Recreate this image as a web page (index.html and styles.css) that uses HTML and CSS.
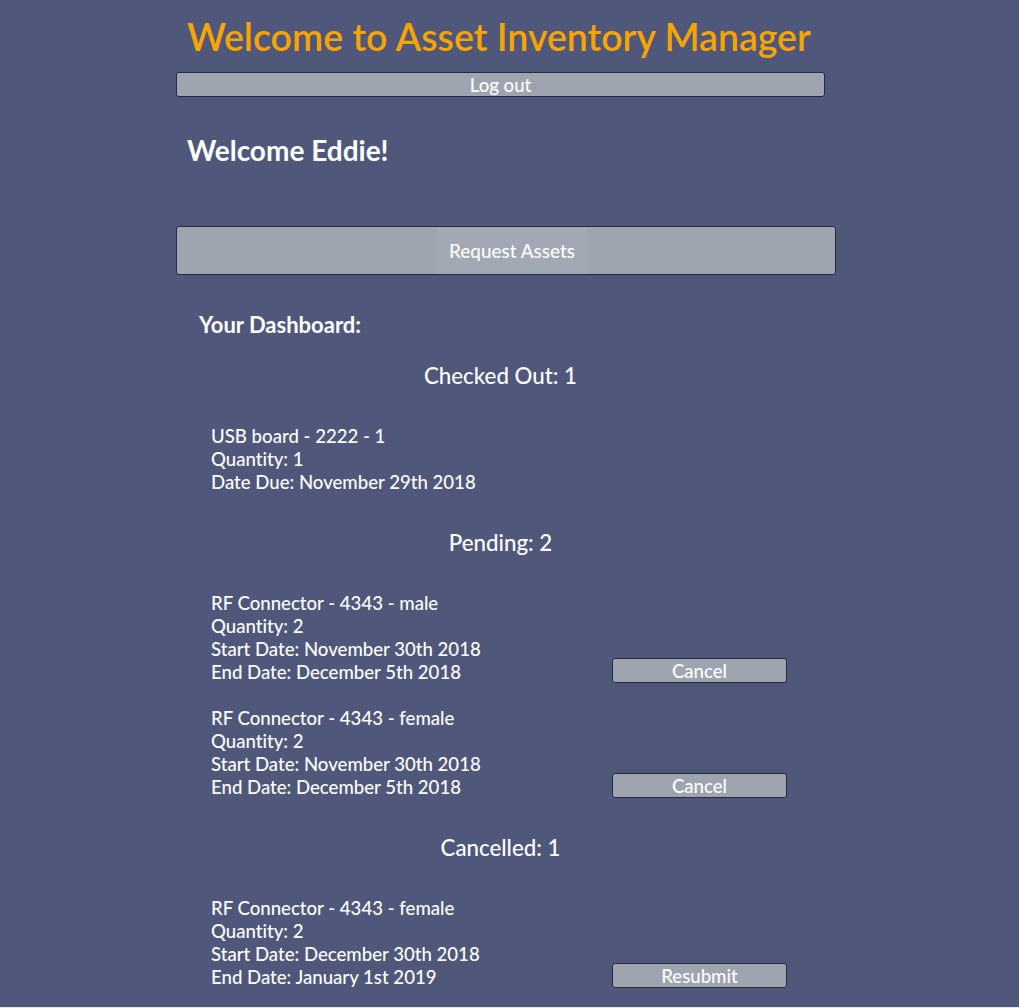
FILE: index.html
```html
<!DOCTYPE html>
<html lang="en">
<head>
<meta charset="utf-8">
<title>Asset Inventory Manager</title>
<link rel="stylesheet" href="styles.css">
</head>
<body>
<div class="page">
  <div class="container">
    <h1 class="title">Welcome to Asset Inventory Manager</h1>
    <button class="btn logout">Log out</button>
    <h2 class="greeting">Welcome Eddie!</h2>
    <button class="btn request"><span class="request-label">Request Assets</span></button>
    <h3 class="dash-title">Your Dashboard:</h3>

    <section class="group">
      <h4 class="group-title">Checked Out: 1</h4>
      <div class="item">
        <div class="item-text">
          <div>USB board - 2222 - 1</div>
          <div>Quantity: 1</div>
          <div>Date Due: November 29th 2018</div>
        </div>
      </div>
    </section>

    <section class="group">
      <h4 class="group-title">Pending: 2</h4>
      <div class="item">
        <div class="item-text">
          <div>RF Connector - 4343 - male</div>
          <div>Quantity: 2</div>
          <div>Start Date: November 30th 2018</div>
          <div>End Date: December 5th 2018</div>
        </div>
        <button class="btn small">Cancel</button>
      </div>
      <div class="item">
        <div class="item-text">
          <div>RF Connector - 4343 - female</div>
          <div>Quantity: 2</div>
          <div>Start Date: November 30th 2018</div>
          <div>End Date: December 5th 2018</div>
        </div>
        <button class="btn small">Cancel</button>
      </div>
    </section>

    <section class="group">
      <h4 class="group-title">Cancelled: 1</h4>
      <div class="item">
        <div class="item-text">
          <div>RF Connector - 4343 - female</div>
          <div>Quantity: 2</div>
          <div>Start Date: December 30th 2018</div>
          <div>End Date: January 1st 2019</div>
        </div>
        <button class="btn small">Resubmit</button>
      </div>
    </section>
  </div>
</div>
</body>
</html>
```

FILE: styles.css
```css
html {
  background: #e4e4e6;
}
body {
  margin: 0;
  font-family: Lato, "Open Sans", sans-serif;
  font-variant-ligatures: none;
  color: #ffffff;
}
.page {
  background: #4f587a;
  height: 1007px;
  overflow: hidden;
}
.container {
  margin-left: 176px;
  width: 660px;
  display: flex;
  flex-direction: column;
  align-items: flex-start;
}
.title {
  margin: 15px 0 0 11px;
  font-size: 37.5px;
  line-height: 43px;
  font-weight: 600;
  color: #f7a300;
}
.btn {
  font-family: Lato, "Open Sans", sans-serif;
  font-variant-ligatures: none;
  background: #9ea5b0;
  color: #ffffff;
  border: 1px solid #262b40;
  border-radius: 3px;
  font-size: 18.6px;
  line-height: 21px;
  font-weight: 500;
  padding: 0;
  cursor: pointer;
}
.logout {
  margin-top: 14px;
  width: 649px;
  height: 25px;
  padding-top: 2px;
}
.greeting {
  margin: 38px 0 0 11px;
  font-size: 28px;
  line-height: 31px;
  font-weight: 700;
}
.request {
  margin-top: 60px;
  width: 660px;
  height: 49px;
  display: flex;
  justify-content: center;
  align-items: stretch;
  padding-left: 12px;
  font-size: 18.9px;
}
.request-label {
  display: flex;
  align-items: center;
  padding: 0 12px;
  background: #a2a9b4;
}
.dash-title {
  margin: 38px 0 0 23px;
  font-size: 22px;
  line-height: 24px;
  font-weight: 700;
}
.group {
  width: 649px;
  display: flex;
  flex-direction: column;
}
.group-title {
  margin: 26px 0 36px;
  text-align: center;
  font-size: 22.3px;
  line-height: 26px;
  font-weight: 500;
}
.group + .group .group-title {
  margin-top: 13px;
}
.item {
  display: flex;
  align-items: flex-end;
  padding-left: 35px;
  margin-bottom: 23px;
}
.item-text {
  width: 401px;
  font-size: 18.6px;
  line-height: 23px;
  font-weight: 500;
}
.small {
  width: 175px;
  height: 25px;
  margin-bottom: 1px;
  padding-top: 1px;
}
```
